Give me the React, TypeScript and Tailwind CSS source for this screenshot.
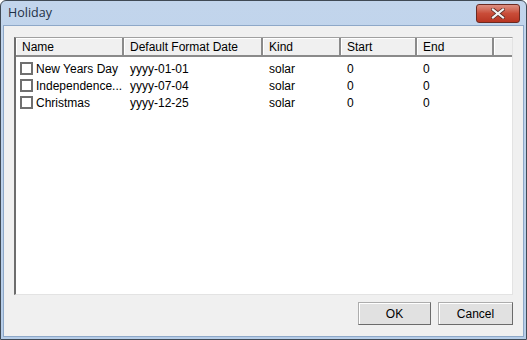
const columns = [
  { label: "Name", w: "w-[108px]" },
  { label: "Default Format Date", w: "w-[139px]" },
  { label: "Kind", w: "w-[78px]" },
  { label: "Start", w: "w-[76px]" },
  { label: "End", w: "w-[77px]" },
];

const holidays = [
  { name: "New Years Day", date: "yyyy-01-01", kind: "solar", start: "0", end: "0" },
  { name: "Independence...", date: "yyyy-07-04", kind: "solar", start: "0", end: "0" },
  { name: "Christmas", date: "yyyy-12-25", kind: "solar", start: "0", end: "0" },
];

const CloseButton = () => (
  <div className="w-[44px] h-[19px] rounded-[3px] border border-[#6b2a22] bg-gradient-to-b from-[#dc8f82] via-[#c94c38] to-[#b83522] flex items-center justify-center">
    <svg width="14" height="11" viewBox="0 0 14 11">
      <path d="M2 1.5 L12 9.5 M12 1.5 L2 9.5" stroke="#5a2a24" strokeWidth="3.6" strokeLinecap="square" />
      <path d="M2 1.5 L12 9.5 M12 1.5 L2 9.5" stroke="#f2f2f2" strokeWidth="2.2" strokeLinecap="square" />
    </svg>
  </div>
);

const Button = ({ label, w }: { label: string; w: string }) => (
  <button className={`${w} h-[23px] bg-[#e1e1e1] border border-[#adadad] border-r-[#6b6b6b] border-b-[#6b6b6b] shadow-[inset_1px_1px_0_#ffffff] text-[12px] text-black`}>
    {label}
  </button>
);

const App = () => {
  return (
    <div className="w-[527px] h-[340px] bg-white font-['Liberation_Sans',Arial,sans-serif]">
      <div className="w-full h-full flex flex-col rounded-t-[6px] border border-[#404a55] bg-gradient-to-b from-[#c2d5ec] to-[#b6cde8] overflow-hidden">
        <div className="h-[24px] shrink-0 flex items-center justify-between pl-[7px] pr-[6px] pt-[1px]">
          <span className="text-[12.5px] text-[#1e3045] font-['Open_Sans','Liberation_Sans',sans-serif]">Holiday</span>
          <CloseButton />
        </div>
        <div className="flex-1 mx-[2px] mb-[2px] border border-[#8ea8c8] bg-[#f0f0f0] flex flex-col pt-[11px] pl-[10px] pr-[9px]">
          <div className="h-[258px] w-[499px] bg-white border border-[#828282] border-r-[#e3e3e3] border-b-[#e3e3e3] border-l-2 border-l-[#6d6d6d] border-t-[#a0a0a0]">
            <div className="flex h-[19px] border-b-2 border-[#8a8a8a] bg-[#f0f0f0]">
              {columns.map((c) => (
                <div key={c.label} className={`${c.w} shrink-0 h-full flex items-center pl-[6px] pt-[1px] text-[12px] text-black border-r-2 border-r-[#8a8a8a] shadow-[inset_1px_1px_0_#ffffff]`}>
                  {c.label}
                </div>
              ))}
              <div className="flex-1 shadow-[inset_1px_1px_0_#ffffff]" />
            </div>
            <ul className="pt-[3px]">
              {holidays.map((h) => (
                <li key={h.name} className="flex h-[17px] items-center text-[12px] text-black">
                  <div className="w-[108px] shrink-0 flex items-center pl-[4px]">
                    <span className="w-[13px] h-[13px] border-2 border-[#707070] bg-white mr-[3px] shrink-0" />
                    <span className="whitespace-nowrap">{h.name}</span>
                  </div>
                  <div className="w-[139px] shrink-0 pl-[6px]">{h.date}</div>
                  <div className="w-[78px] shrink-0 pl-[6px]">{h.kind}</div>
                  <div className="w-[76px] shrink-0 pl-[6px]">{h.start}</div>
                  <div className="w-[77px] shrink-0 pl-[6px]">{h.end}</div>
                </li>
              ))}
            </ul>
          </div>
          <div className="flex justify-end gap-[7px] mt-[7px] pr-[1px]">
            <Button label="OK" w="w-[73px]" />
            <Button label="Cancel" w="w-[75px]" />
          </div>
        </div>
      </div>
    </div>
  );
};

export default App;
